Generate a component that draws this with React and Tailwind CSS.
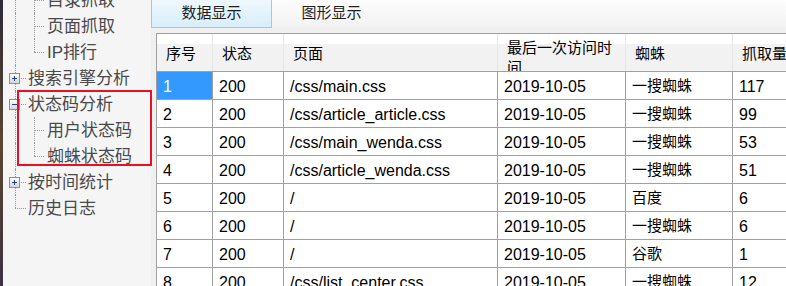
import React from "react";

const rows = [
  ["1", "200", "/css/main.css", "2019-10-05", "一搜蜘蛛", "117"],
  ["2", "200", "/css/article_article.css", "2019-10-05", "一搜蜘蛛", "99"],
  ["3", "200", "/css/main_wenda.css", "2019-10-05", "一搜蜘蛛", "53"],
  ["4", "200", "/css/article_wenda.css", "2019-10-05", "一搜蜘蛛", "51"],
  ["5", "200", "/", "2019-10-05", "百度", "6"],
  ["6", "200", "/", "2019-10-05", "一搜蜘蛛", "6"],
  ["7", "200", "/", "2019-10-05", "谷歌", "1"],
  ["8", "200", "/css/list_center.css", "2019-10-05", "一搜蜘蛛", "12"],
];

const tree = [
  { level: 1, label: "目录抓取" },
  { level: 1, label: "页面抓取" },
  { level: 1, label: "IP排行", lastChild: true },
  { level: 0, label: "搜索引擎分析", box: "plus" },
  { level: 0, label: "状态码分析", box: "minus" },
  { level: 1, label: "用户状态码" },
  { level: 1, label: "蜘蛛状态码", lastChild: true },
  { level: 0, label: "按时间统计", box: "plus" },
  { level: 0, label: "历史日志", last: true },
];

const font = { fontFamily: '"Liberation Sans", "Noto Sans CJK SC", sans-serif' };

const ExpandBox = ({ type }) => (
  <svg
    width="11"
    height="11"
    viewBox="0 0 11 11"
    className="absolute left-[6px] top-[8px]"
  >
    <defs>
      <linearGradient id={`g-${type}`} x1="0" y1="0" x2="0" y2="1">
        <stop offset="0" stopColor="#ffffff" />
        <stop offset="1" stopColor="#d4d4d4" />
      </linearGradient>
    </defs>
    <rect x="0.5" y="0.5" width="10" height="10" fill={`url(#g-${type})`} stroke="#8e8f8f" />
    <line x1="3" y1="5.5" x2="8" y2="5.5" stroke="#24408c" />
    {type === "plus" && <line x1="5.5" y1="3" x2="5.5" y2="8" stroke="#24408c" />}
  </svg>
);

const TreeRow = ({ item }) => {
  const dot = "border-dotted border-[#9a9a9a]";
  return (
    <div className="flex h-[26px] items-center">
      <div className="relative h-full w-[24px] shrink-0">
        <div
          className={`absolute left-[12px] top-0 border-l ${dot} ${
            item.last ? "h-1/2" : "h-full"
          }`}
        />
        {item.level === 0 && (
          <div className={`absolute left-[12px] top-1/2 w-[11px] border-t ${dot}`} />
        )}
        {item.box && <ExpandBox type={item.box} />}
      </div>
      {item.level === 1 && (
        <div className="relative h-full w-[19px] shrink-0">
          <div
            className={`absolute left-[7px] top-0 border-l ${dot} ${
              item.lastChild ? "h-1/2" : "h-full"
            }`}
          />
          <div className={`absolute left-[7px] top-1/2 w-[10px] border-t ${dot}`} />
        </div>
      )}
      <span className="whitespace-nowrap pl-[1px] text-[17px] leading-none text-[#4a4a4a]">
        {item.label}
      </span>
    </div>
  );
};

const cols = "grid grid-cols-[56px_71px_214px_128px_107px_1fr]";

export default function App() {
  return (
    <div
      className="relative flex h-[286px] w-[786px] overflow-hidden bg-[#f0f0f0]"
      style={font}
    >
      <div className="w-[3px] shrink-0 bg-gradient-to-b from-[#2c2a35] via-[#5a4632] to-[#3a3340]" />

      {/* tree */}
      <div className="w-[148px] shrink-0 bg-[#f5f5f5]">
        <div className="-mt-[13px]">
          {tree.map((item) => (
            <TreeRow key={item.label} item={item} />
          ))}
        </div>
      </div>

      {/* right side */}
      <div className="flex min-w-0 flex-1 flex-col">
        <div className="flex h-[28px] shrink-0 bg-gradient-to-b from-[#fdfdfd] to-[#f2f2f2]">
          <div className="flex h-[28px] w-[121px] items-center justify-center border-x border-b border-[#a8c6dc] bg-gradient-to-b from-[#eef7fd] to-[#d8eefb] text-[15px] text-[#1e1e1e]">
            数据显示
          </div>
          <div className="flex h-[27px] w-[119px] items-center justify-center text-[15px] text-[#1e1e1e]">
            图形显示
          </div>
        </div>

        <div className="pl-[5px] pt-[5px]">
          <div className="w-[700px] border-l border-t border-[#a0a0a0] bg-white text-[16px] text-black">
            <div
              className={`${cols} h-[38px] border-b border-[#a0a0a0] bg-[linear-gradient(#ffffff_0%,#ffffff_26%,#f2f2f2_26%,#f2f2f2_100%)] text-[15px]`}
            >
              {["序号", "状态", "页面"].map((h) => (
                <div key={h} className="flex items-center border-r border-[#e6e6e6] pl-[9px] pt-[3px]">
                  {h}
                </div>
              ))}
              <div className="overflow-hidden border-r border-[#e6e6e6] pl-[9px] pr-[4px] pt-[4px] leading-[20px]">
                最后一次访问时间
              </div>
              {["蜘蛛", "抓取量"].map((h) => (
                <div key={h} className="flex items-center border-r border-[#e6e6e6] pl-[9px] pt-[3px]">
                  {h}
                </div>
              ))}
            </div>

            {rows.map((r, i) => (
              <div key={i} className={`${cols} h-[28px] border-b border-[#a0a0a0]`}>
                {r.map((c, j) => (
                  <div
                    key={j}
                    className={`flex items-center whitespace-nowrap border-r border-[#a0a0a0] pl-[6px] pt-[2px] ${
                      j === 4 ? "text-[15px]" : ""
                    } ${i === 0 && j === 0 ? "bg-[#3399ff] text-white" : ""}`}
                  >
                    {c}
                  </div>
                ))}
              </div>
            ))}
          </div>
        </div>
      </div>

      {/* red annotation box */}
      <div className="absolute left-[17px] top-[90px] h-[76px] w-[135px] border-2 border-[#e81123]" />
    </div>
  );
}
